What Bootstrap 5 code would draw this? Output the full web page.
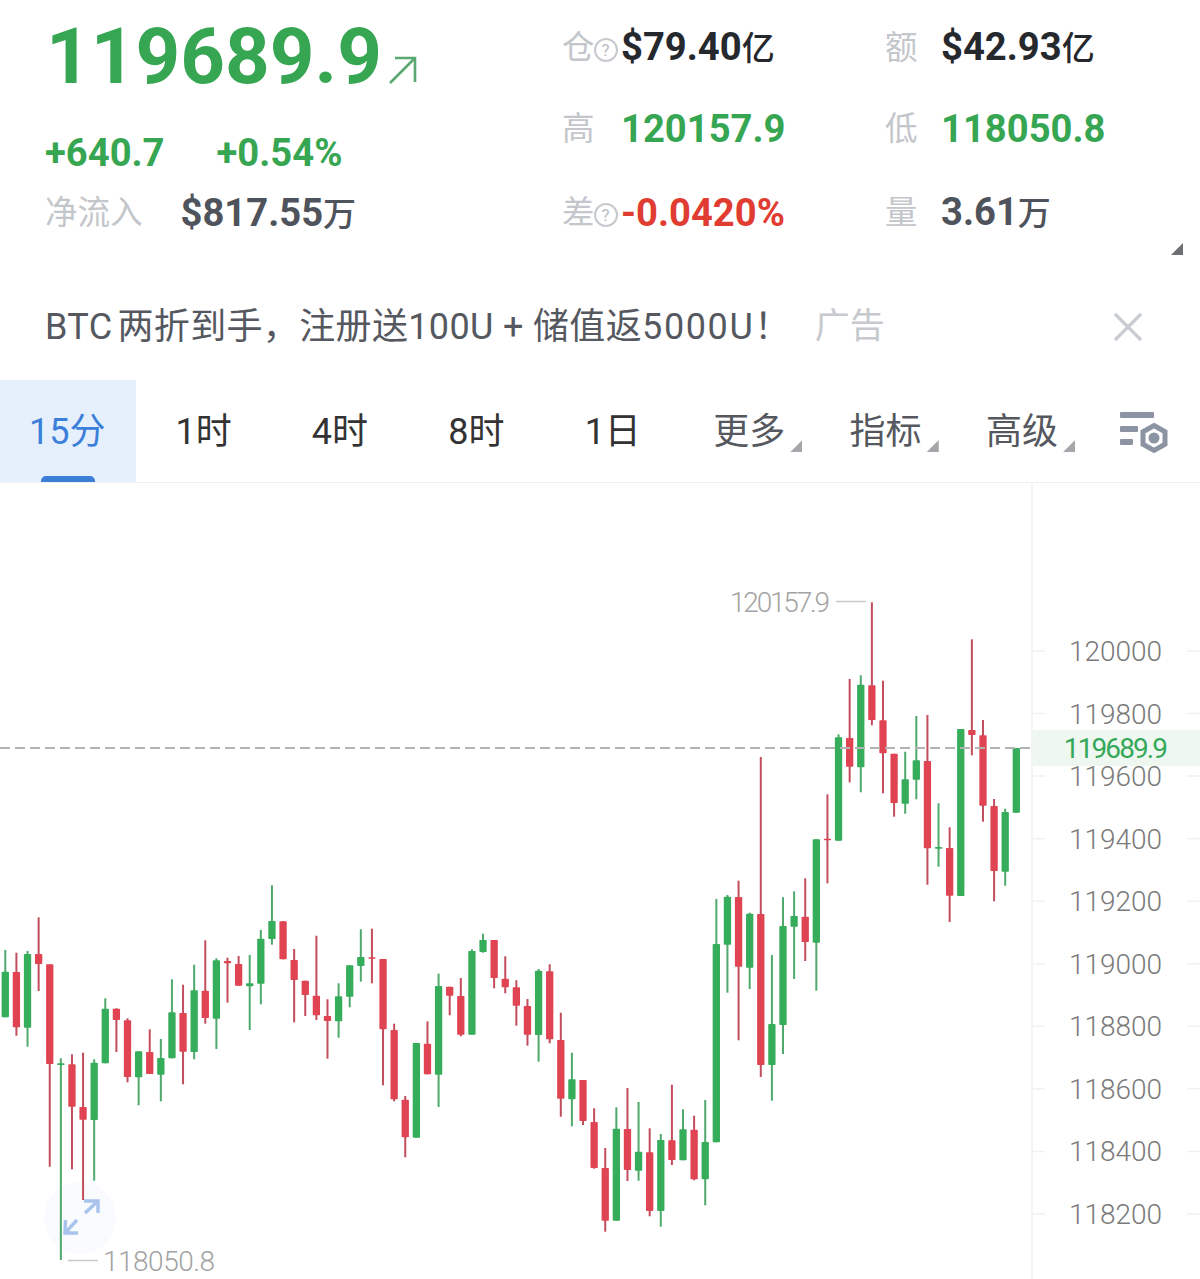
<!DOCTYPE html>
<html lang="zh-CN">
<head>
    <meta charset="UTF-8">
    <meta name="viewport" content="width=device-width, initial-scale=1.0">
    <title>BTC 15分</title>
    <link href="https://cdn.jsdelivr.net/npm/bootstrap@5.3.2/dist/css/bootstrap.min.css" rel="stylesheet">
    <style>
        body {
            margin: 0;
            background-color: #fff;
            font-family: Roboto, "Noto Sans CJK SC", sans-serif;
            color: #2b2e33;
            overflow: hidden;
        }
        .quote-head {
            height: 280px;
        }
        .quote-left {
            flex: 0 0 562px;
            padding-left: 45px;
        }
        .price-line {
            height: 114px;
            padding-left: 1px;
            font-size: 78px;
            line-height: 114px;
            font-weight: 700;
            color: #37a653;
        }
        .price-arrow {
            width: 30px;
            height: 30px;
            margin-left: 5px;
            margin-top: 55px;
        }
        .change-line {
            height: 78px;
            gap: 52px;
            line-height: 78px;
        }
        .inflow-line {
            height: 42px;
            gap: 38px;
            line-height: 42px;
        }
        .stat-value {
            font-size: 38.2px;
            font-weight: 700;
            white-space: nowrap;
        }
        .stat-unit {
            font-size: 33px;
            font-weight: 500;
        }
        .stat-label {
            font-size: 32.5px;
            color: #c3c6ca;
            white-space: nowrap;
        }
        .val-green { color: #37a653; }
        .val-red { color: #e03c31; }
        .val-dark { color: #25282d; }
        .val-slate { color: #4f535c; }
        .stat-grid {
            display: grid;
            grid-template-columns: 59px 264px 56px 1fr;
            grid-template-rows: 82px 80px 88px;
            padding-top: 7px;
            align-items: center;
            line-height: 60px;
        }
        .help-mark {
            display: inline-block;
            width: 24px;
            height: 24px;
            margin-left: -1px;
            border: 2px solid #c6c9cd;
            border-radius: 50%;
            font-size: 17px;
            line-height: 20px;
            text-align: center;
            color: #b9bcc1;
            vertical-align: 3px;
        }
        .corner-mark {
            position: absolute;
            width: 12px;
            height: 12px;
            background-color: #6b6e73;
            clip-path: polygon(100% 0, 100% 100%, 0 100%);
        }
        .head-corner {
            right: 17px;
            top: 243px;
        }
        .ad-strip {
            height: 100px;
            padding: 0 57px 6px 45px;
        }
        .ad-text {
            font-size: 36px;
            letter-spacing: .35px;
            color: #55585f;
            white-space: nowrap;
        }
        .ad-cjk {
            margin-left: 5px;
        }
        .ad-wide {
            letter-spacing: 1.6px;
        }
        .ad-tag {
            margin-left: 24px;
            font-size: 35px;
            color: #c6c9cd;
        }
        .ad-close {
            width: 30px;
            height: 30px;
            margin-top: -1px;
        }
        .tab-strip {
            height: 103px;
            border-bottom: 1px solid #f1f1f1;
        }
        .tab-item {
            flex: 0 0 136.4px;
            position: relative;
            padding: 2px 2px 0 0;
            font-size: 36px;
            color: #333;
            text-align: center;
        }
        .tab-on {
            background-color: #e6f0fd;
            color: #3b7fd9;
        }
        .tab-on::after {
            content: "";
            position: absolute;
            left: 41px;
            bottom: 0;
            width: 54px;
            height: 6px;
            border-radius: 5px 5px 0 0;
            background-color: #3b7fd9;
        }
        .tab-menu {
            color: #55585f;
        }
        .tab-menu .corner-mark {
            background-color: #a4a6aa;
            right: 16px;
            top: 60px;
        }
        .tab-tool-wrap {
            padding: 4px 4px 0 0;
        }
        .tab-tool {
            width: 50px;
            height: 44px;
        }
        .chart-box {
            height: 796px;
        }
        .chart-svg {
            display: block;
            width: 1200px;
            height: 796px;
        }
        .axis-text {
            font-family: Roboto, sans-serif;
            font-size: 28px;
            font-weight: 300;
            fill: #7a7a7a;
        }
        .mark-text {
            font-family: Roboto, sans-serif;
            font-size: 28px;
            font-weight: 300;
            fill: #a3a3a3;
        }
    </style>
</head>
<body>

    <div class="quote-head d-flex position-relative">
        <div class="quote-left">
            <div class="price-line d-flex">
                <span>119689.9</span>
                <svg class="price-arrow" viewBox="0 0 30 30" fill="none" stroke="#5aa872" stroke-width="2.6">
                    <path d="M3 28 L27 4 M8 3 H28 V27"/>
                </svg>
            </div>
            <div class="change-line d-flex">
                <span class="stat-value val-green">+640.7</span>
                <span class="stat-value val-green">+0.54%</span>
            </div>
            <div class="inflow-line d-flex">
                <span class="stat-label">净流入</span>
                <span class="stat-value val-slate">$817.55<span class="stat-unit">万</span></span>
            </div>
        </div>
        <div class="stat-grid flex-grow-1">
            <span class="stat-label">仓<span class="help-mark">?</span></span>
            <span class="stat-value val-dark">$79.40<span class="stat-unit">亿</span></span>
            <span class="stat-label">额</span>
            <span class="stat-value val-dark">$42.93<span class="stat-unit">亿</span></span>

            <span class="stat-label">高</span>
            <span class="stat-value val-green">120157.9</span>
            <span class="stat-label">低</span>
            <span class="stat-value val-green">118050.8</span>

            <span class="stat-label">差<span class="help-mark">?</span></span>
            <span class="stat-value val-red">-0.0420%</span>
            <span class="stat-label">量</span>
            <span class="stat-value val-slate">3.61<span class="stat-unit">万</span></span>
        </div>
        <span class="corner-mark head-corner"></span>
    </div>

    <div class="ad-strip d-flex align-items-center">
        <span class="ad-text">BTC<span class="ad-cjk">两折到手，注册送100U + 储值返</span><span class="ad-wide">5000U</span>！</span>
        <span class="ad-tag">广告</span>
        <svg class="ad-close ms-auto" viewBox="0 0 30 30" stroke="#c9cdd1" stroke-width="3.2">
            <path d="M2 2 L28 28 M28 2 L2 28"/>
        </svg>
    </div>

    <div class="tab-strip d-flex">
        <div class="tab-item tab-on d-flex align-items-center justify-content-center">15分</div>
        <div class="tab-item d-flex align-items-center justify-content-center">1时</div>
        <div class="tab-item d-flex align-items-center justify-content-center">4时</div>
        <div class="tab-item d-flex align-items-center justify-content-center">8时</div>
        <div class="tab-item d-flex align-items-center justify-content-center">1日</div>
        <div class="tab-item tab-menu d-flex align-items-center justify-content-center">更多<span class="corner-mark"></span></div>
        <div class="tab-item tab-menu d-flex align-items-center justify-content-center">指标<span class="corner-mark"></span></div>
        <div class="tab-item tab-menu d-flex align-items-center justify-content-center">高级<span class="corner-mark"></span></div>
        <div class="tab-tool-wrap flex-grow-1 d-flex align-items-center justify-content-center">
            <svg class="tab-tool" viewBox="0 0 50 44">
                <g fill="#8c94a3">
                    <rect x="1" y="1" width="34" height="6" rx="1"/>
                    <rect x="1" y="15" width="18" height="6" rx="1"/>
                    <rect x="1" y="28" width="13" height="6" rx="1"/>
                </g>
                <path d="M35 14.5 L46 20.7 V33.3 L35 39.5 L24 33.3 V20.7 Z" fill="#fff" stroke="#8c94a3" stroke-width="5"/>
                <circle cx="35" cy="27" r="5.5" fill="#8c94a3"/>
            </svg>
        </div>
    </div>

    <div class="chart-box">
        <svg id="klineChart" class="chart-svg" viewBox="0 483 1200 796"></svg>
    </div>

    <script src="https://cdn.jsdelivr.net/npm/bootstrap@5.3.2/dist/js/bootstrap.bundle.min.js"></script>
    <script>
        (function() {
            // [color, high, body top, body bottom, low] in page pixels
            const candles = [
                ['g',950,971.7,1017.3,1017.3],['r',952.7,972,1027.3,1035.7],['g',951,954,1027.7,1046.7],['r',917.3,954,964,991],
                ['r',964.3,964.3,1064,1166.7],['g',1058.3,1063.3,1065,1260],['r',1054.3,1064.3,1106.7,1169.3],['r',1052.7,1107,1119.7,1200],
                ['g',1059.3,1062.7,1120,1180.7],['g',998.3,1008.7,1063.3,1063.3],['r',1008.3,1008.7,1020,1052],['r',1018.3,1020.3,1077,1082.3],
                ['g',1051.3,1051.3,1077.3,1105.3],['r',1029.3,1052,1074,1074],['g',1039,1058,1074.7,1101.3],['g',979.3,1012.3,1058.3,1058.3],
                ['r',984.7,1013,1051.7,1084.3],['g',964.7,990.3,1052,1059.3],['r',940.3,990.7,1018,1023.7],['g',958.3,960.3,1018.7,1049],
                ['r',957.7,961,963.3,1002.7],['r',956,964,985.7,985.7],['g',955,983.3,986.3,1030],['g',930,938.7,983.7,1004.3],
                ['g',885.3,921,939,944.7],['r',921.3,921.3,959.3,959.3],['r',949,960,980,1022.3],['r',980.7,980.7,995,1016],
                ['r',935.7,995.7,1015.3,1020],['r',999.3,1016,1021,1058.7],['g',983.3,996.3,1021.3,1037.7],['g',965.3,965.3,996.7,1007.3],
                ['g',929.3,957,966,981.7],['r',928.7,957.3,958.3,983.3],['r',959,959,1029.3,1085.3],['r',1023.7,1030,1099.3,1101.3],
                ['r',1096,1099.7,1137.3,1157.3],['g',1043,1043,1137.7,1137.7],['r',1021.3,1043.7,1074.3,1074.3],['g',973.7,986,1074.7,1107],
                ['r',986.7,986.7,995.7,1015.3],['r',978,996,1034.7,1036.3],['g',949.3,951,1034.7,1034.7],['g',933.7,940,952,952.7],
                ['r',940,940,978,988.3],['r',956.3,978.7,987.3,993.3],['r',980.3,987.3,1005.7,1025.7],['r',999,1006,1034.7,1045.7],
                ['g',969,970.7,1035,1061.7],['r',964.3,971.3,1039.3,1043.3],['r',1012.7,1040,1098.7,1116.7],['g',1052.7,1079.3,1099.3,1126.3],
                ['r',1080,1080,1121,1125],['r',1108.3,1122,1168,1168.7],['r',1148,1168,1220.7,1231.7],['g',1107.3,1128.7,1220.7,1220.7],
                ['r',1088,1129,1170,1181],['g',1102,1151.7,1170.7,1180.7],['r',1128.3,1152.3,1211,1216.3],['g',1134,1140,1211,1226.7],
                ['r',1084.7,1140.3,1160,1165],['g',1109.3,1129.3,1160.3,1160.3],['r',1115.7,1129.7,1179.3,1180.3],['g',1100,1142,1179.3,1205.3],
                ['g',899,944,1142.3,1142.3],['g',895,896.7,944.7,992.7],['r',880.7,897,966.7,1040.3],['g',912.7,913.7,967.7,989],
                ['r',757,914,1065,1077],['g',955,1024,1065,1100.7],['g',897.3,926,1025,1054],['g',891.3,916,926.7,979],
                ['r',878.3,916.7,942,961],['g',839.3,839.3,942.7,990.7],['r',794.3,838.7,839.7,883.3],['g',734.3,737.3,840.7,840.7],
                ['r',679,738,766.7,782.3],['g',675.3,684.7,767.3,792.3],['r',602.3,685.3,720,725.3],['r',680.7,720.3,753.3,793.3],
                ['r',753.7,753.7,803,816.7],['g',751.7,779.3,803.7,813.7],['g',716,760.3,779.7,799.3],['r',715,761,848.3,884.7],
                ['g',803.3,847,848.7,866.7],['r',827.3,848,895.7,922],['g',729,729,896,896],['r',639.3,730,735,755.3],
                ['r',720,735.3,805.7,821.7],['r',799,806,871,901.3],['g',808.7,812,871.7,885.7],['g',748,748,812.7,812.7]
            ];
            const axisLabels = ['120000','119800','119600','119400','119200','119000','118800','118600','118400','118200'];

            const parts = [];
            // price axis
            parts.push('<rect x="1031" y="483" width="2" height="796" fill="#f4f4f4"/>');
            axisLabels.forEach((label, i) => {
                const y = 651 + i * 62.55;
                parts.push(`<path d="M1033 ${y} H1045 M1187 ${y} H1200" stroke="#f1f1f1" stroke-width="1.5"/>`);
                parts.push(`<text class="axis-text" x="1115.5" y="${y + 10}" text-anchor="middle">${label}</text>`);
            });
            parts.push('<rect x="1033" y="730" width="167" height="36" fill="#eff7f1"/>');
            parts.push('<text class="axis-text" x="1115" y="758" text-anchor="middle" letter-spacing="-1.9" style="fill:#35a85a;font-weight:400">119689.9</text>');

            // expand button sits under the candles
            parts.push('<circle cx="80" cy="1218" r="36" fill="#f9fbfe"/>');

            candles.forEach((c, i) => {
                const x = 5.3 + i * 11.11;
                const body = c[0] === 'g' ? '#36ad5b' : '#e04352';
                const wick = c[0] === 'g' ? '#4fa96d' : '#c24d5d';
                parts.push(`<rect x="${(x - 1).toFixed(2)}" y="${c[1]}" width="2" height="${(c[4] - c[1]).toFixed(1)}" fill="${wick}"/>`);
                parts.push(`<rect x="${(x - 3.65).toFixed(2)}" y="${c[2]}" width="7.3" height="${Math.max(c[3] - c[2], 1.5).toFixed(1)}" rx="0.8" fill="${body}"/>`);
            });

            parts.push('<path d="M85 1213 L98 1201 M84 1201 H98 V1213 M77 1220 L65 1233 M65.500 1220 L65 1233 H78" fill="none" stroke="#a8c4ec" stroke-width="3.4"/>');

            // last price line
            parts.push('<path d="M0 748 H1031" stroke="#b3b3b3" stroke-width="2" stroke-dasharray="10 5" fill="none"/>');

            // high and low marks
            parts.push('<path d="M836 601.500 H866 M68 1260.500 H98" stroke="#c9c9c9" stroke-width="1.500"/>');
            parts.push('<text class="mark-text" x="730" y="612" letter-spacing="-2.2">120157.9</text>');
            parts.push('<text class="mark-text" x="103" y="1271" letter-spacing="-.5">118050.8</text>');

            document.getElementById('klineChart').innerHTML = parts.join('');
        })();
    </script>
</body>
</html>
